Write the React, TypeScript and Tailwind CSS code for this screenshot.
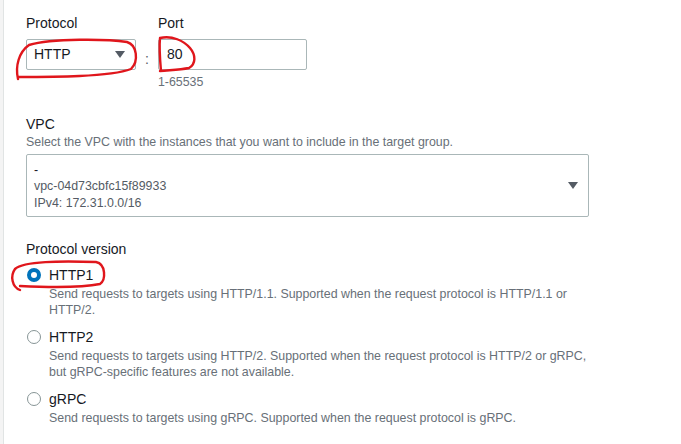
import React from 'react'

interface VersionOption {
  id: string
  label: string
  lines: string[]
}

const versions: VersionOption[] = [
  {
    id: 'HTTP1',
    label: 'HTTP1',
    lines: [
      'Send requests to targets using HTTP/1.1. Supported when the request protocol is HTTP/1.1 or',
      'HTTP/2.',
    ],
  },
  {
    id: 'HTTP2',
    label: 'HTTP2',
    lines: [
      'Send requests to targets using HTTP/2. Supported when the request protocol is HTTP/2 or gRPC,',
      'but gRPC-specific features are not available.',
    ],
  },
  {
    id: 'gRPC',
    label: 'gRPC',
    lines: ['Send requests to targets using gRPC. Supported when the request protocol is gRPC.'],
  },
]

function Caret() {
  return (
    <svg width="10" height="7" viewBox="0 0 10 7" className="shrink-0">
      <path d="M0 0 H10 L5 7 Z" fill="#545b64" />
    </svg>
  )
}

function Radio({ checked }: { checked: boolean }) {
  if (checked) {
    return (
      <span className="mt-[3px] box-border h-[14px] w-[14px] shrink-0 rounded-full border-[4px] border-[#0073bb] bg-white" />
    )
  }
  return (
    <span className="mt-[3px] box-border h-[14px] w-[14px] shrink-0 rounded-full border-[1.5px] border-[#879596] bg-white" />
  )
}

// hand drawn red marks laid over the form
function Scribbles() {
  return (
    <svg
      className="pointer-events-none absolute left-0 top-0"
      width="681"
      height="444"
      viewBox="0 0 681 444"
      fill="none"
      stroke="#e0161c"
      strokeWidth="2.4"
      strokeLinecap="round"
      strokeLinejoin="round"
    >
      <path d="M18 79 C15 66 19 52 29 45 C52 38 108 39 127 42 C137 45 139 61 131 69 C110 77 52 77 18 77" />
      <path d="M161 71 C160 60 159 48 160 38 C172 35 184 41 190 48 C196 55 196 64 189 68 C179 70 169 70 160 71" />
      <path d="M20 290 C12 287 10 276 15 269 C24 261 60 261 96 262 C106 264 106 280 100 284 C80 288 42 287 20 286" />
    </svg>
  )
}

export default function App() {
  return (
    <div className="relative flex h-[444px] w-[681px] overflow-hidden bg-white font-['Liberation_Sans',Arial,sans-serif] text-[#16191f]">
      <div className="w-[4px] shrink-0 border-r border-[#e1e4e4] bg-[#f4f4f4]" />
      <div className="flex flex-col pl-[22px] pt-[13px]">
        <div className="flex items-start gap-[9px]">
          <div className="flex flex-col">
            <label className="text-[14px] leading-[20px]">Protocol</label>
            <div className="mt-[6px] flex h-[31px] w-[110px] items-center justify-between rounded-[2px] border border-[#aab7b8] pl-[7px] pr-[10px] text-[14px]">
              <span>HTTP</span>
              <Caret />
            </div>
          </div>
          <span className="mt-[36px] text-[14px] leading-[20px] text-[#545b64]">:</span>
          <div className="flex flex-col">
            <label className="text-[14px] leading-[20px]">Port</label>
            <div className="mt-[6px] flex h-[31px] w-[149px] items-center rounded-[2px] border border-[#aab7b8] pl-[8px] text-[14px]">
              80
            </div>
            <span className="mt-[4px] text-[12.4px] leading-[16px] text-[#687078]">1-65535</span>
          </div>
        </div>

        <label className="mt-[24px] text-[14px] leading-[20px]">VPC</label>
        <p className="text-[12.4px] leading-[16px] text-[#687078]">
          Select the VPC with the instances that you want to include in the target group.
        </p>
        <div className="mt-[4px] flex h-[63px] w-[563px] items-center justify-between rounded-[2px] border border-[#aab7b8] pl-[7px] pr-[10px]">
          <div className="flex flex-col pt-[2px] text-[12.4px] leading-[16.5px]">
            <span className="text-[#16191f]">-</span>
            <span className="text-[#545b64]">vpc-04d73cbfc15f89933</span>
            <span className="text-[#545b64]">IPv4: 172.31.0.0/16</span>
          </div>
          <Caret />
        </div>

        <label className="mt-[22px] text-[14px] leading-[20px]">Protocol version</label>
        <div className="mt-[6px] flex flex-col gap-[9px]">
          {versions.map((v, i) => (
            <div key={v.id} className="flex gap-[8px] pl-[1px]">
              <Radio checked={i === 0} />
              <div className="flex flex-col">
                <span className="text-[14px] leading-[20px]">{v.label}</span>
                <div className="mt-[1px] text-[12.4px] leading-[16px] text-[#687078]">
                  {v.lines.map((l) => (
                    <div key={l}>{l}</div>
                  ))}
                </div>
              </div>
            </div>
          ))}
        </div>
      </div>
      <Scribbles />
    </div>
  )
}
